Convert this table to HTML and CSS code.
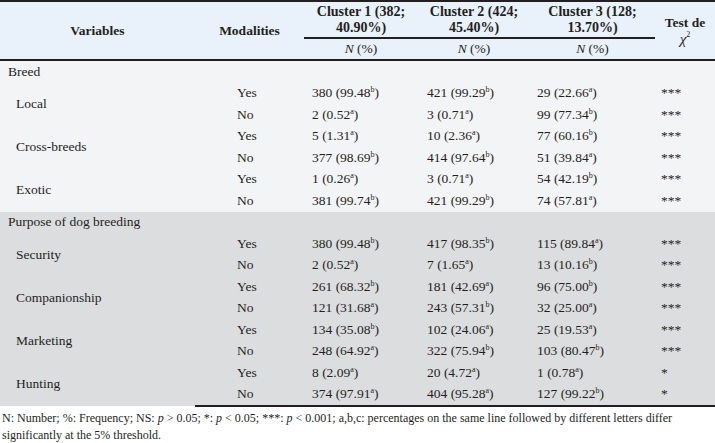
FILE: index.html
```html
<!DOCTYPE html>
<html>
<head>
<meta charset="utf-8">
<link rel="stylesheet" href="styles.css">
</head>
<body>
<table class="tbl">
  <colgroup>
    <col class="c-var"><col class="c-mod"><col class="c-c1"><col class="c-c2"><col class="c-c3"><col class="c-test">
  </colgroup>
  <thead>
    <tr class="h1">
      <th rowspan="2" class="hb">Variables</th>
      <th rowspan="2" class="hb">Modalities</th>
      <th class="cl">Cluster 1 (382;<br>40.90%)</th>
      <th class="cl">Cluster 2 (424;<br>45.40%)</th>
      <th class="cl">Cluster 3 (128;<br>13.70%)</th>
      <th rowspan="2" class="hb test">Test de<br><i class="chi">χ</i><sup class="sq">2</sup></th>
    </tr>
    <tr class="h2">
      <th class="hb np"><i>N</i> (%)</th>
      <th class="hb np"><i>N</i> (%)</th>
      <th class="hb np"><i>N</i> (%)</th>
    </tr>
  </thead>
  <tbody class="s1">
    <tr class="grp"><td colspan="6" class="g">Breed</td></tr>
    <tr><td rowspan="2" class="v">Local</td><td class="m">Yes</td><td class="d1">380 (99.48<sup>b</sup>)</td><td class="d2">421 (99.29<sup>b</sup>)</td><td class="d3">29 (22.66<sup>a</sup>)</td><td class="t">***</td></tr>
    <tr><td class="m">No</td><td class="d1">2 (0.52<sup>a</sup>)</td><td class="d2">3 (0.71<sup>a</sup>)</td><td class="d3">99 (77.34<sup>b</sup>)</td><td class="t">***</td></tr>
    <tr><td rowspan="2" class="v">Cross-breeds</td><td class="m">Yes</td><td class="d1">5 (1.31<sup>a</sup>)</td><td class="d2">10 (2.36<sup>a</sup>)</td><td class="d3">77 (60.16<sup>b</sup>)</td><td class="t">***</td></tr>
    <tr><td class="m">No</td><td class="d1">377 (98.69<sup>b</sup>)</td><td class="d2">414 (97.64<sup>b</sup>)</td><td class="d3">51 (39.84<sup>a</sup>)</td><td class="t">***</td></tr>
    <tr><td rowspan="2" class="v">Exotic</td><td class="m">Yes</td><td class="d1">1 (0.26<sup>a</sup>)</td><td class="d2">3 (0.71<sup>a</sup>)</td><td class="d3">54 (42.19<sup>b</sup>)</td><td class="t">***</td></tr>
    <tr><td class="m">No</td><td class="d1">381 (99.74<sup>b</sup>)</td><td class="d2">421 (99.29<sup>b</sup>)</td><td class="d3">74 (57.81<sup>a</sup>)</td><td class="t">***</td></tr>
  </tbody>
  <tbody class="s2">
    <tr class="grp"><td colspan="6" class="g">Purpose of dog breeding</td></tr>
    <tr><td rowspan="2" class="v">Security</td><td class="m">Yes</td><td class="d1">380 (99.48<sup>b</sup>)</td><td class="d2">417 (98.35<sup>b</sup>)</td><td class="d3">115 (89.84<sup>a</sup>)</td><td class="t">***</td></tr>
    <tr><td class="m">No</td><td class="d1">2 (0.52<sup>a</sup>)</td><td class="d2">7 (1.65<sup>a</sup>)</td><td class="d3">13 (10.16<sup>b</sup>)</td><td class="t">***</td></tr>
    <tr><td rowspan="2" class="v">Companionship</td><td class="m">Yes</td><td class="d1">261 (68.32<sup>b</sup>)</td><td class="d2">181 (42.69<sup>a</sup>)</td><td class="d3">96 (75.00<sup>b</sup>)</td><td class="t">***</td></tr>
    <tr><td class="m">No</td><td class="d1">121 (31.68<sup>a</sup>)</td><td class="d2">243 (57.31<sup>b</sup>)</td><td class="d3">32 (25.00<sup>a</sup>)</td><td class="t">***</td></tr>
    <tr><td rowspan="2" class="v">Marketing</td><td class="m">Yes</td><td class="d1">134 (35.08<sup>b</sup>)</td><td class="d2">102 (24.06<sup>a</sup>)</td><td class="d3">25 (19.53<sup>a</sup>)</td><td class="t">***</td></tr>
    <tr><td class="m">No</td><td class="d1">248 (64.92<sup>a</sup>)</td><td class="d2">322 (75.94<sup>b</sup>)</td><td class="d3">103 (80.47<sup>b</sup>)</td><td class="t">***</td></tr>
    <tr><td rowspan="2" class="v">Hunting</td><td class="m">Yes</td><td class="d1">8 (2.09<sup>a</sup>)</td><td class="d2">20 (4.72<sup>a</sup>)</td><td class="d3">1 (0.78<sup>a</sup>)</td><td class="t">*</td></tr>
    <tr><td class="m">No</td><td class="d1">374 (97.91<sup>a</sup>)</td><td class="d2">404 (95.28<sup>a</sup>)</td><td class="d3">127 (99.22<sup>b</sup>)</td><td class="t">*</td></tr>
  </tbody>
</table>
<p class="note">N: Number; %: Frequency; NS: <i>p</i> &gt; 0.05; *: <i>p</i> &lt; 0.05; ***: <i>p</i> &lt; 0.001; a,b,c: percentages on the same line followed by different letters differ significantly at the 5% threshold.</p>
</body>
</html>
```
FILE: styles.css
```css
html, body {
  margin: 0;
  padding: 0;
  background: #ffffff;
}
body {
  font-family: "Liberation Serif", "Times New Roman", serif;
  color: #231f20;
  width: 715px;
}
.tbl {
  width: 715px;
  border-collapse: collapse;
  table-layout: fixed;
  font-size: 13.5px;
}
.c-var { width: 195px; }
.c-mod { width: 109px; }
.c-c1 { width: 114px; }
.c-c2 { width: 112px; }
.c-c3 { width: 125px; }
.c-test { width: 60px; }

thead {
  background: #e9f1fa;
}
thead tr.h1 th {
  border-top: 2px solid #231f20;
}
th {
  font-weight: bold;
  text-align: center;
  padding: 0;
  line-height: 16px;
}
.h1 { height: 37px; }
.h2 { height: 22px; }
.hb {
  border-bottom: 2px solid #231f20;
}
.cl {
  border-bottom: 2px solid #231f20;
  vertical-align: middle;
  font-size: 14px;
}
.np {
  font-weight: normal;
}
.test {
  line-height: 17px;
}
.chi {
  font-weight: normal;
  font-size: 15px;
}
.sq {
  font-size: 8px;
  vertical-align: 7px;
  line-height: 0;
  font-weight: normal;
}

.s1 { background: #f3f4f5; }
.s2 { background: #dcdddf; }

td {
  padding: 0;
  height: 21.5px;
  line-height: 16px;
  white-space: nowrap;
}
.g { padding-left: 8px; }
.v { padding-left: 16px; }
.m { padding-left: 42px; }
.d1 { padding-left: 8px; }
.d2 { padding-left: 9px; }
.d3 { padding-left: 7px; }
.t { padding-left: 6px; }
.s2 tr:last-child td {
  border-bottom: 2px solid #231f20;
}
sup {
  font-size: 8px;
  line-height: 0;
  vertical-align: 5px;
}
.note {
  margin: 3px 0 0 2px;
  font-size: 12px;
  line-height: 17px;
  width: 700px;
}
```
